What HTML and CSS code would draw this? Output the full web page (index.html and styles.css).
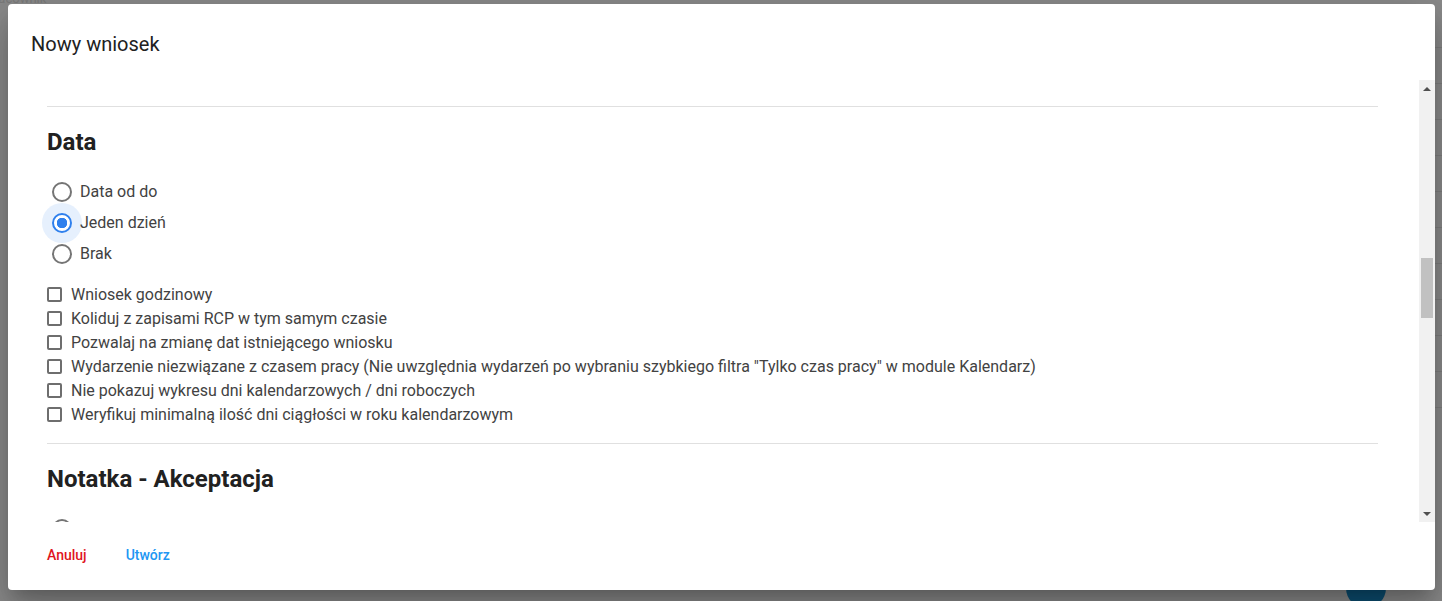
FILE: index.html
```html
<!DOCTYPE html>
<html lang="pl">
<head>
<meta charset="utf-8">
<title>Nowy wniosek</title>
<link rel="stylesheet" href="styles.css">
</head>
<body>
<div class="page-behind">
  <div class="behind-label">Pracownik</div>
  <div class="behind-lines">
    <span class="bline"></span><span class="bline"></span><span class="bline"></span><span class="bline"></span><span class="bline"></span><span class="bline"></span><span class="bline"></span><span class="bline"></span><span class="bline"></span><span class="bline"></span><span class="bline"></span>
  </div>
  <div class="behind-fab"></div>
</div>
<div class="backdrop">
  <div class="dialog" role="dialog" aria-labelledby="dlg-title">
    <h1 class="dialog-title" id="dlg-title">Nowy wniosek</h1>
    <div class="dialog-body">
      <div class="content">
        <hr class="sep first">
        <h2 class="section-title">Data</h2>
        <div class="radio-group">
          <label class="radio-row"><input type="radio" name="data" class="radio"><span class="radio-label">Data od do</span></label>
          <label class="radio-row"><input type="radio" name="data" class="radio focused" checked><span class="radio-label">Jeden dzień</span></label>
          <label class="radio-row"><input type="radio" name="data" class="radio"><span class="radio-label">Brak</span></label>
        </div>
        <div class="check-group">
          <label class="check-row"><input type="checkbox" class="check"><span>Wniosek godzinowy</span></label>
          <label class="check-row"><input type="checkbox" class="check"><span>Koliduj z zapisami RCP w tym samym czasie</span></label>
          <label class="check-row"><input type="checkbox" class="check"><span>Pozwalaj na zmianę dat istniejącego wniosku</span></label>
          <label class="check-row"><input type="checkbox" class="check"><span>Wydarzenie niezwiązane z czasem pracy (Nie uwzględnia wydarzeń po wybraniu szybkiego filtra "Tylko czas pracy" w module Kalendarz)</span></label>
          <label class="check-row"><input type="checkbox" class="check"><span>Nie pokazuj wykresu dni kalendarzowych / dni roboczych</span></label>
          <label class="check-row"><input type="checkbox" class="check"><span>Weryfikuj minimalną ilość dni ciągłości w roku kalendarzowym</span></label>
        </div>
        <hr class="sep">
        <h2 class="section-title">Notatka - Akceptacja</h2>
        <div class="radio-group clipped">
          <label class="radio-row"><input type="radio" name="notatka" class="radio"><span class="radio-label">Brak</span></label>
          <label class="radio-row"><input type="radio" name="notatka" class="radio"><span class="radio-label">Opcjonalna</span></label>
        </div>
      </div>
      <div class="scrollbar" aria-hidden="true">
        <div class="sb-btn"><span class="tri-up"></span></div>
        <div class="sb-track"><div class="sb-thumb"></div></div>
        <div class="sb-btn"><span class="tri-down"></span></div>
      </div>
    </div>
    <div class="dialog-actions">
      <button class="btn btn-cancel" type="button">Anuluj</button>
      <button class="btn btn-create" type="button">Utwórz</button>
    </div>
  </div>
</div>
</body>
</html>
```
FILE: styles.css
```css
* { box-sizing: border-box; }
html, body { margin: 0; height: 100%; }
body {
  width: 1442px;
  height: 601px;
  overflow: hidden;
  background: #8b8b8b;
  font-family: Roboto, "Liberation Sans", Arial, sans-serif;
  position: relative;
}

/* faint page behind the modal overlay */
.page-behind { position: absolute; inset: 0; }
.behind-label {
  position: absolute; left: -14px; top: -9px;
  font-size: 13px; color: #7a7a7a;
}
.behind-lines {
  position: absolute; right: 0; top: 47px; width: 12px;
  display: flex; flex-direction: column; gap: 35px;
}
.bline { display: block; height: 1px; background: #7e7e7e; }
.behind-fab {
  position: absolute; left: 1346px; top: 568px;
  width: 40px; height: 40px; border-radius: 50%;
  background: #0c4f73;
}

.backdrop {
  position: relative;
  padding: 4px 7px 0 8px;
}
.dialog {
  width: 1427px;
  height: 586px;
  background: #fff;
  border-radius: 4px;
  box-shadow: 0 11px 15px -7px rgba(0,0,0,.2), 0 24px 38px 3px rgba(0,0,0,.14), 0 9px 46px 8px rgba(0,0,0,.12);
  display: flex;
  flex-direction: column;
  overflow: hidden;
}
.dialog-title {
  margin: 0;
  padding: 24px 24px 20px 23px;
  font-size: 20px;
  line-height: 32px;
  font-weight: 400;
  color: #212121;
}
.dialog-body {
  flex: 1;
  display: flex;
  min-height: 0;
}
.content {
  flex: 1;
  overflow: hidden;
  padding: 0 41px 0 39px;
}
.sep {
  margin: 0;
  border: 0;
  height: 1px;
  background: #e0e0e0;
}
.sep.first { margin-top: 26px; }
.check-group + .sep { margin-top: 17px; }

.section-title {
  margin: 19px 0 18px;
  font-size: 24px;
  line-height: 32px;
  font-weight: 700;
  color: #212121;
}
.radio-group.clipped { margin-top: 3px; }

.radio-group { display: flex; flex-direction: column; }
.radio-row {
  display: flex;
  align-items: center;
  height: 31px;
  font-size: 16px;
  color: #424242;
}
.radio {
  appearance: none;
  -webkit-appearance: none;
  margin: 0 8px 0 5px;
  width: 20px;
  height: 20px;
  border: 2px solid #757575;
  border-radius: 50%;
  position: relative;
  flex: none;
  background: #fff;
}
.radio:checked {
  border-color: #2f80ed;
  background: radial-gradient(circle, #2f80ed 0 5px, #fff 5.5px);
}
.radio.focused::before {
  content: "";
  position: absolute;
  left: -12px; top: -12px;
  width: 40px; height: 40px;
  border-radius: 50%;
  background: rgba(47,128,237,.12);
  z-index: -1;
}
.radio-group .radio-row { position: relative; z-index: 0; }

.check-group {
  margin-top: 13px;
  display: flex;
  flex-direction: column;
}
.check-row {
  display: flex;
  align-items: center;
  height: 24px;
  font-size: 16px;
  color: #424242;
}
.check {
  appearance: none;
  -webkit-appearance: none;
  margin: 0 9px 0 0;
  width: 15px;
  height: 15px;
  border: 2px solid #6e6e6e;
  border-radius: 2px;
  background: #fff;
  flex: none;
}

.scrollbar {
  width: 16px;
  flex: none;
  background: #f1f1f1;
  display: flex;
  flex-direction: column;
}
.sb-btn {
  height: 17px;
  display: flex;
  align-items: center;
  justify-content: center;
  flex: none;
}
.tri-up, .tri-down {
  width: 0; height: 0;
  border-left: 4px solid transparent;
  border-right: 4px solid transparent;
}
.tri-up { border-bottom: 4px solid #505050; }
.tri-down { border-top: 4px solid #505050; }
.sb-track { flex: 1; padding: 0 2px; }
.sb-thumb {
  margin-top: 161px;
  height: 60px;
  background: #c1c1c1;
}

.dialog-actions {
  height: 68px;
  flex: none;
  display: flex;
  align-items: center;
  padding: 0 0 2px 31px;
  gap: 23px;
}
.btn {
  font-family: inherit;
  font-size: 14px;
  font-weight: 500;
  background: none;
  border: 0;
  padding: 6px 8px;
  line-height: 20px;
  cursor: pointer;
}
.btn-cancel { color: #e0141e; }
.btn-create { color: #2196f3; }
```
